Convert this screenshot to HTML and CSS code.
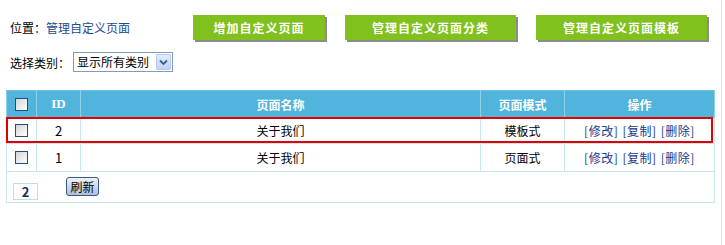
FILE: index.html
```html
<!DOCTYPE html>
<html lang="zh-CN">
<head>
<meta charset="utf-8">
<title>管理自定义页面</title>
<link rel="stylesheet" href="styles.css">
</head>
<body>
<div class="page">
  <div class="topbar">
    <div class="crumb">位置：<a class="crumb-link" href="#">管理自定义页面</a></div>
    <div class="btns">
      <a class="gbtn gbtn-sm" href="#">增加自定义页面</a>
      <a class="gbtn" href="#">管理自定义页面分类</a>
      <a class="gbtn" href="#">管理自定义页面模板</a>
    </div>
  </div>

  <div class="filter">
    <span class="filter-label">选择类别：</span>
    <div class="select">
      <span class="select-text">显示所有类别</span>
      <span class="select-arrow">
        <svg width="9" height="7" viewBox="0 0 9 7"><path d="M1 1.5 L4.5 5 L8 1.5" fill="none" stroke="#3d5a9a" stroke-width="1.8"/></svg>
      </span>
    </div>
  </div>

  <div class="table-wrap">
    <table class="grid">
      <colgroup>
        <col class="c-chk"><col class="c-id"><col class="c-name"><col class="c-mode"><col class="c-ops">
      </colgroup>
      <thead>
        <tr class="head">
          <th><span class="chk"></span></th>
          <th class="serif">ID</th>
          <th>页面名称</th>
          <th>页面模式</th>
          <th>操作</th>
        </tr>
      </thead>
      <tbody>
        <tr class="r1">
          <td><span class="chk"></span></td>
          <td class="num">2</td>
          <td>关于我们</td>
          <td>模板式</td>
          <td class="ops"><a href="#">[修改]</a> <a href="#">[复制]</a> <a href="#">[删除]</a></td>
        </tr>
        <tr class="r2">
          <td><span class="chk"></span></td>
          <td class="num">1</td>
          <td>关于我们</td>
          <td>页面式</td>
          <td class="ops"><a href="#">[修改]</a> <a href="#">[复制]</a> <a href="#">[删除]</a></td>
        </tr>
        <tr class="foot">
          <td colspan="5">
            <div class="foot-inner">
              <span class="pagebox">2</span>
              <button class="refresh" type="button">刷新</button>
            </div>
          </td>
        </tr>
      </tbody>
    </table>
    <div class="highlight"></div>
  </div>
</div>
</body>
</html>
```

FILE: styles.css
```css
html, body {
  margin: 0;
  padding: 0;
  background: #ffffff;
}
body {
  font-family: "Noto Sans CJK SC", "Noto Sans", sans-serif;
  font-size: 12px;
  color: #000;
}
a { text-decoration: none; }

.page {
  width: 721px;
  height: 245px;
  border-right: 1px solid #d6e9f5;
  box-sizing: content-box;
}

.topbar {
  display: flex;
  align-items: flex-start;
  padding-top: 15px;
  height: 27px;
}
.crumb {
  width: 183px;
  padding-left: 10px;
  line-height: 26px;
  color: #000;
}
.crumb-link { color: #1c4b8f; }

.btns {
  display: flex;
  gap: 20px;
}
.gbtn {
  display: block;
  width: 171px;
  height: 25px;
  line-height: 25px;
  background: #80c11e;
  color: #fff;
  font-weight: bold;
  text-align: center;
  box-shadow: 2px 2px 0 #8c8c8c;
  letter-spacing: 1px;
}
.gbtn-sm { width: 132px; }

.filter {
  display: flex;
  align-items: center;
  margin-top: 10px;
  height: 20px;
  padding-left: 10px;
}
.filter-label { width: 63px; }
.select {
  display: flex;
  align-items: center;
  height: 18px;
  width: 95px;
  border: 1px solid #7f9db9;
  padding-left: 3px;
  background: #fff;
}
.select-text { flex: 1; line-height: 18px; }
.select-arrow {
  width: 15px;
  height: 16px;
  margin-right: 1px;
  border: 1px solid #b9c9ef;
  border-radius: 1px;
  background: linear-gradient(#e4ecfc, #c2d3f7);
  box-sizing: border-box;
  display: flex;
  align-items: center;
  justify-content: center;
}

.table-wrap {
  position: relative;
  margin-top: 18px;
  margin-left: 6px;
  width: 708px;
}
.grid {
  width: 708px;
  border-collapse: collapse;
  table-layout: fixed;
  border: 1px solid #6cc0e3;
}
.c-chk { width: 30px; }
.c-id { width: 44px; }
.c-name { width: 400px; }
.c-mode { width: 84px; }
.c-ops { width: 150px; }

.grid th, .grid td {
  text-align: center;
  padding: 0;
  border: 1px solid #c8e5f2;
}
.grid th {
  background: #50b4dd;
  color: #fff;
  font-weight: bold;
  height: 26px;
  border-color: #8fd0ec;
  border-top-color: #6cc0e3;
}
.grid th.serif { font-family: "Liberation Serif", serif; font-size: 13px; }
.grid td.num { font-size: 13px; }
.r1 td { height: 25px; }
.r2 td { height: 27px; }
.grid td a { color: #1a3a8a; }
.grid td.ops { letter-spacing: 0.5px; word-spacing: 1px; }

.chk {
  display: block;
  width: 11px;
  height: 11px;
  margin: 0 auto;
  border: 1px solid #1c4f7a;
  background: linear-gradient(135deg, #d4d4d4, #ffffff);
}

.grid .foot td {
  height: 30px;
  text-align: left;
  vertical-align: top;
}
.foot-inner {
  display: flex;
  align-items: flex-start;
  padding-left: 6px;
}
.pagebox {
  margin-top: 11px;
  width: 23px;
  height: 15px;
  border: 1px solid #c5dbe8;
  color: #14305a;
  font-weight: bold;
  font-size: 13px;
  line-height: 16px;
  text-align: center;
}
.refresh {
  margin-left: 28px;
  margin-top: 5px;
  width: 33px;
  height: 19px;
  padding: 0;
  font-family: "Noto Sans CJK SC", sans-serif;
  font-size: 12px;
  line-height: 15px;
  color: #000;
  border: 1px solid #3b5a80;
  border-radius: 3px;
  background: linear-gradient(#eef3fb, #a9bedd);
}

.highlight {
  position: absolute;
  left: 0;
  top: 27px;
  width: 707px;
  height: 26px;
  border: 2px solid #e00000;
  box-sizing: border-box;
  pointer-events: none;
}
```
